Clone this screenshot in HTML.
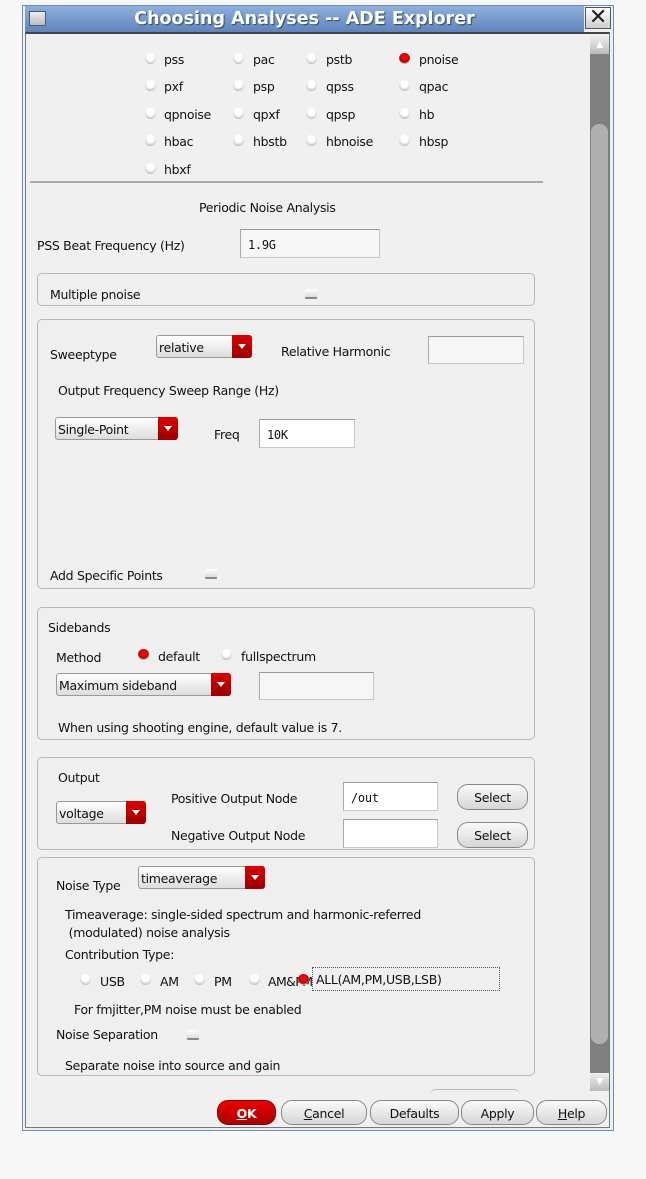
<!DOCTYPE html>
<html><head><meta charset="utf-8"><style>
*{margin:0;padding:0;box-sizing:border-box}
body{width:646px;height:1179px;background:#f7f7f7;position:relative;overflow:hidden;font-family:"DejaVu Sans","Liberation Sans",sans-serif;font-size:12.5px;color:#111;letter-spacing:-0.3px}
.a{position:absolute;white-space:nowrap}
.t{position:absolute;white-space:nowrap;line-height:14px;margin-top:2px}
.box{position:absolute;border:1px solid #b8b8b8;border-radius:5px;background:#efefef}
.inp{position:absolute;background:#f6f6f6;border:1px solid #c8c8c8;border-top-color:#999;border-left-color:#aaa;font-family:"DejaVu Sans Mono","Liberation Mono",monospace;font-size:12px;padding:8px 0 0 7px}
.rad{position:absolute;width:11px;height:11px;border-radius:50%;background:radial-gradient(circle at 50% 35%,#fff 40%,#ccc 70%,#888 100%)}
.rad.on{background:radial-gradient(circle at 50% 40%,#f00 35%,#a00 55%,#ccc 75%,#888 100%)}
.chk{position:absolute;width:12px;height:10px;background:linear-gradient(#fff,#ddd);border-bottom:2px solid #888;border-radius:1px}
.dd{position:absolute;height:23px;border:1px solid #999;border-radius:3px;background:linear-gradient(#fff,#ddd);padding:4px 0 0 2px}
.dd b{position:absolute;right:-1px;top:-1px;bottom:-1px;width:20px;background:linear-gradient(#d00,#900);border-radius:0 3px 3px 0}
.dd b:after{content:"";position:absolute;left:6px;top:9px;border:4px solid transparent;border-top:5px solid #fff;border-bottom:0}
.btn{position:absolute;height:25px;border:1px solid #888;border-radius:11px;background:linear-gradient(#fafafa,#d6d6d6);text-align:center;line-height:25px}
</style></head><body>
<div class="a" style="left:22px;top:5px;width:592px;height:1126px;border:1px solid #6a8cc0;background:#efefef"></div>
<div class="a" style="left:25px;top:6px;width:559px;height:27px;background:linear-gradient(#8fb0dc,#5d82bd);"></div>
<div class="a" style="left:29px;top:11px;width:17px;height:15px;border:1px solid #556;background:linear-gradient(#eee,#bbb)"></div>
<div class="a" style="left:25px;top:6px;width:559px;text-align:center;color:#fff;font-weight:bold;font-size:17.5px;line-height:26px;letter-spacing:0;text-shadow:1px 1px 1px #345">Choosing Analyses -- ADE Explorer</div>
<div class="a" style="left:585px;top:7px;width:26px;height:22px;border:1px solid #555;background:linear-gradient(#fff,#ccc);font-size:22px;line-height:20px;text-align:center;color:#222">✕</div>
<div class="a" style="left:25px;top:32px;width:585px;height:1096px;border:1px solid #777;border-top:2px solid #444;background:#f0f0f0"></div>
<div class="a" style="left:590px;top:36px;width:19px;height:1055px;background:#808080"></div>
<div class="a" style="left:590px;top:36px;width:19px;height:18px;background:linear-gradient(#eee,#bbb);color:#fff;font-size:9px;text-align:center;line-height:18px">▲</div>
<div class="a" style="left:591px;top:124px;width:17px;height:920px;background:#b0b0b0;border-radius:8px"></div>
<div class="a" style="left:590px;top:1073px;width:19px;height:18px;background:linear-gradient(#eee,#bbb);color:#fff;font-size:9px;text-align:center;line-height:18px">▼</div>
<div class="rad" style="left:145px;top:53px"></div><div class="t" style="left:164px;top:51px">pss</div>
<div class="rad" style="left:233px;top:53px"></div><div class="t" style="left:253px;top:51px">pac</div>
<div class="rad" style="left:306px;top:53px"></div><div class="t" style="left:326px;top:51px">pstb</div>
<div class="rad on" style="left:399px;top:53px"></div><div class="t" style="left:419px;top:51px">pnoise</div>
<div class="rad" style="left:145px;top:80px"></div><div class="t" style="left:164px;top:78px">pxf</div>
<div class="rad" style="left:233px;top:80px"></div><div class="t" style="left:253px;top:78px">psp</div>
<div class="rad" style="left:306px;top:80px"></div><div class="t" style="left:326px;top:78px">qpss</div>
<div class="rad" style="left:399px;top:80px"></div><div class="t" style="left:419px;top:78px">qpac</div>
<div class="rad" style="left:145px;top:108px"></div><div class="t" style="left:164px;top:106px">qpnoise</div>
<div class="rad" style="left:233px;top:108px"></div><div class="t" style="left:253px;top:106px">qpxf</div>
<div class="rad" style="left:306px;top:108px"></div><div class="t" style="left:326px;top:106px">qpsp</div>
<div class="rad" style="left:399px;top:108px"></div><div class="t" style="left:419px;top:106px">hb</div>
<div class="rad" style="left:145px;top:135px"></div><div class="t" style="left:164px;top:133px">hbac</div>
<div class="rad" style="left:233px;top:135px"></div><div class="t" style="left:253px;top:133px">hbstb</div>
<div class="rad" style="left:306px;top:135px"></div><div class="t" style="left:326px;top:133px">hbnoise</div>
<div class="rad" style="left:399px;top:135px"></div><div class="t" style="left:419px;top:133px">hbsp</div>
<div class="rad" style="left:145px;top:163px"></div><div class="t" style="left:164px;top:161px">hbxf</div>
<div class="a" style="left:30px;top:181px;width:513px;height:2px;background:#aaa"></div>
<div class="t" style="left:199px;top:199px">Periodic Noise Analysis</div>
<div class="t" style="left:37px;top:237px">PSS Beat Frequency (Hz)</div>
<div class="inp" style="left:240px;top:229px;width:140px;height:29px">1.9G</div>
<div class="box" style="left:37px;top:273px;width:498px;height:33px"></div>
<div class="t" style="left:50px;top:286px">Multiple pnoise</div>
<div class="chk" style="left:305px;top:289px"></div>
<div class="box" style="left:37px;top:319px;width:498px;height:270px"></div>
<div class="t" style="left:50px;top:346px">Sweeptype</div>
<div class="dd" style="left:156px;top:335px;width:96px">relative<b></b></div>
<div class="t" style="left:281px;top:343px">Relative Harmonic</div>
<div class="inp" style="left:428px;top:336px;width:96px;height:28px"></div>
<div class="t" style="left:58px;top:382px">Output Frequency Sweep Range (Hz)</div>
<div class="dd" style="left:55px;top:417px;width:123px">Single-Point<b></b></div>
<div class="t" style="left:214px;top:426px">Freq</div>
<div class="inp" style="left:259px;top:419px;width:96px;height:29px;background:#fff">10K</div>
<div class="t" style="left:50px;top:567px">Add Specific Points</div>
<div class="chk" style="left:205px;top:569px"></div>
<div class="box" style="left:37px;top:607px;width:498px;height:133px"></div>
<div class="t" style="left:48px;top:619px">Sidebands</div>
<div class="t" style="left:56px;top:649px">Method</div>
<div class="rad on" style="left:138px;top:649px"></div><div class="t" style="left:158px;top:648px">default</div>
<div class="rad" style="left:221px;top:649px"></div><div class="t" style="left:241px;top:648px">fullspectrum</div>
<div class="dd" style="left:56px;top:673px;width:175px">Maximum sideband<b></b></div>
<div class="inp" style="left:259px;top:672px;width:115px;height:28px"></div>
<div class="t" style="left:58px;top:719px">When using shooting engine, default value is 7.</div>
<div class="box" style="left:37px;top:757px;width:498px;height:93px"></div>
<div class="t" style="left:58px;top:769px">Output</div>
<div class="dd" style="left:56px;top:801px;width:90px">voltage<b></b></div>
<div class="t" style="left:171px;top:790px">Positive Output Node</div>
<div class="inp" style="left:343px;top:782px;width:95px;height:29px;background:#fff">/out</div>
<div class="t" style="left:171px;top:827px">Negative Output Node</div>
<div class="inp" style="left:343px;top:819px;width:95px;height:29px;background:#fff"></div>
<div class="btn" style="left:457px;top:784px;width:71px;height:26px">Select</div>
<div class="btn" style="left:457px;top:822px;width:71px;height:26px">Select</div>
<div class="box" style="left:37px;top:857px;width:498px;height:219px"></div>
<div class="t" style="left:56px;top:877px">Noise Type</div>
<div class="dd" style="left:138px;top:866px;width:127px">timeaverage<b></b></div>
<div class="t" style="left:65px;top:906px">Timeaverage: single-sided spectrum and harmonic-referred</div>
<div class="t" style="left:65px;top:924px">&nbsp;(modulated) noise analysis</div>
<div class="t" style="left:65px;top:946px">Contribution Type:</div>
<div class="rad" style="left:80px;top:974px"></div><div class="t" style="left:100px;top:973px">USB</div>
<div class="rad" style="left:140px;top:974px"></div><div class="t" style="left:160px;top:973px">AM</div>
<div class="rad" style="left:194px;top:974px"></div><div class="t" style="left:214px;top:973px">PM</div>
<div class="rad" style="left:249px;top:974px"></div><div class="t" style="left:268px;top:973px;letter-spacing:-0.6px">AM&amp;PM</div>
<div class="rad on" style="left:298px;top:974px"></div>
<div class="t" style="left:312px;top:965px;width:188px;height:24px;border:1px dotted #555;padding:5px 0 0 3px;line-height:14px">ALL(AM,PM,USB,LSB)</div>
<div class="t" style="left:74px;top:1001px">For fmjitter,PM noise must be enabled</div>
<div class="t" style="left:56px;top:1026px">Noise Separation</div>
<div class="chk" style="left:187px;top:1030px"></div>
<div class="t" style="left:65px;top:1057px">Separate noise into source and gain</div>
<div class="a" style="left:430px;top:1089px;width:90px;height:6px;border-top:1px solid #bbb;border-radius:6px 6px 0 0"></div>
<div class="btn" style="left:217px;top:1100px;width:59px;background:linear-gradient(#e00,#a00);color:#fff;font-weight:bold;border-color:#800"><u>O</u>K</div>
<div class="btn" style="left:281px;top:1100px;width:86px"><u>C</u>ancel</div>
<div class="btn" style="left:370px;top:1100px;width:89px">Defaults</div>
<div class="btn" style="left:461px;top:1100px;width:73px">Apply</div>
<div class="btn" style="left:536px;top:1100px;width:71px"><u>H</u>elp</div>
</body></html>
